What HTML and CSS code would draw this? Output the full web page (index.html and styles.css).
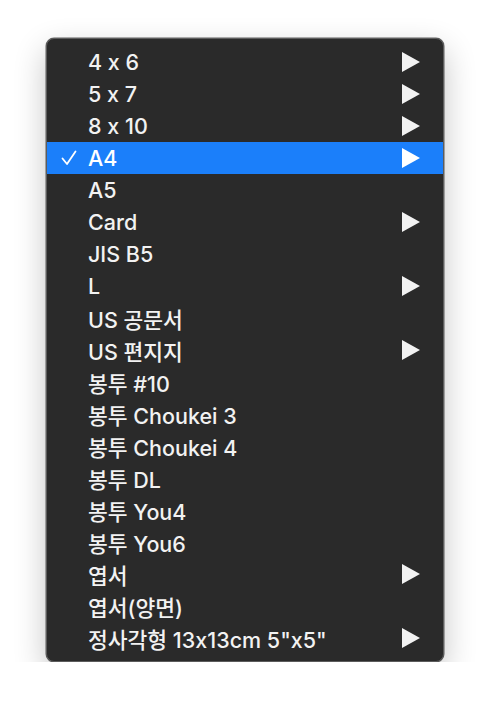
FILE: index.html
```html
<!DOCTYPE html>
<html lang="ko">
<head>
<meta charset="utf-8">
<link rel="stylesheet" href="styles.css">
</head>
<body>
<div class="menu">
  <div class="item"><span class="check"></span><span class="label">4 x 6</span><span class="arrow"></span></div>
  <div class="item"><span class="check"></span><span class="label">5 x 7</span><span class="arrow"></span></div>
  <div class="item"><span class="check"></span><span class="label">8 x 10</span><span class="arrow"></span></div>
  <div class="item selected"><span class="check"><svg viewBox="0 0 16 16" width="16" height="16"><path d="M1.5 8.5 L6 14 L14.5 1.5" fill="none" stroke="#fff" stroke-width="1.8" stroke-linecap="round" stroke-linejoin="round"/></svg></span><span class="label">A4</span><span class="arrow"></span></div>
  <div class="item"><span class="check"></span><span class="label">A5</span></div>
  <div class="item"><span class="check"></span><span class="label">Card</span><span class="arrow"></span></div>
  <div class="item"><span class="check"></span><span class="label">JIS B5</span></div>
  <div class="item"><span class="check"></span><span class="label">L</span><span class="arrow"></span></div>
  <div class="item"><span class="check"></span><span class="label">US 공문서</span></div>
  <div class="item"><span class="check"></span><span class="label">US 편지지</span><span class="arrow"></span></div>
  <div class="item"><span class="check"></span><span class="label">봉투 #10</span></div>
  <div class="item"><span class="check"></span><span class="label">봉투 Choukei 3</span></div>
  <div class="item"><span class="check"></span><span class="label">봉투 Choukei 4</span></div>
  <div class="item"><span class="check"></span><span class="label">봉투 DL</span></div>
  <div class="item"><span class="check"></span><span class="label">봉투 You4</span></div>
  <div class="item"><span class="check"></span><span class="label">봉투 You6</span></div>
  <div class="item"><span class="check"></span><span class="label">엽서</span><span class="arrow"></span></div>
  <div class="item"><span class="check"></span><span class="label">엽서(양면)</span></div>
  <div class="item"><span class="check"></span><span class="label">정사각형 13x13cm 5"x5"</span><span class="arrow"></span></div>
</div>
</body>
</html>
```
FILE: styles.css
```css
html, body {
  margin: 0;
  padding: 0;
  background: #ffffff;
}
body {
  padding: 38px 0 0 46px;
  font-family: "Inter", "Noto Sans CJK KR", sans-serif;
  font-feature-settings: "calt" 0;
}
.menu {
  width: 396px;
  height: 608px;
  padding: 7px 0;
  background: #2a2a2a;
  border: 1px solid #5c5c5c;
  border-radius: 8px;
  box-shadow: 0 0 0 0.5px rgba(0,0,0,0.6), 0 12px 32px rgba(0,0,0,0.24);
  display: flex;
  flex-direction: column;
}
.item {
  height: 32px;
  display: flex;
  align-items: center;
  color: #f2f2f2;
  font-size: 21.5px;
  font-weight: 500;
}
.item.selected {
  background: #1b7ffa;
  color: #ffffff;
}
.check {
  width: 41px;
  flex: none;
  display: flex;
  justify-content: center;
  padding-left: 2px;
  box-sizing: border-box;
}
.check svg { display: block; }
.label {
  flex: 1;
  white-space: pre;
}
.arrow {
  width: 0;
  height: 0;
  border-top: 10px solid transparent;
  border-bottom: 10px solid transparent;
  border-left: 18px solid #f2f2f2;
  margin-right: 23px;
}
.selected .arrow { border-left-color: #ffffff; }
```
